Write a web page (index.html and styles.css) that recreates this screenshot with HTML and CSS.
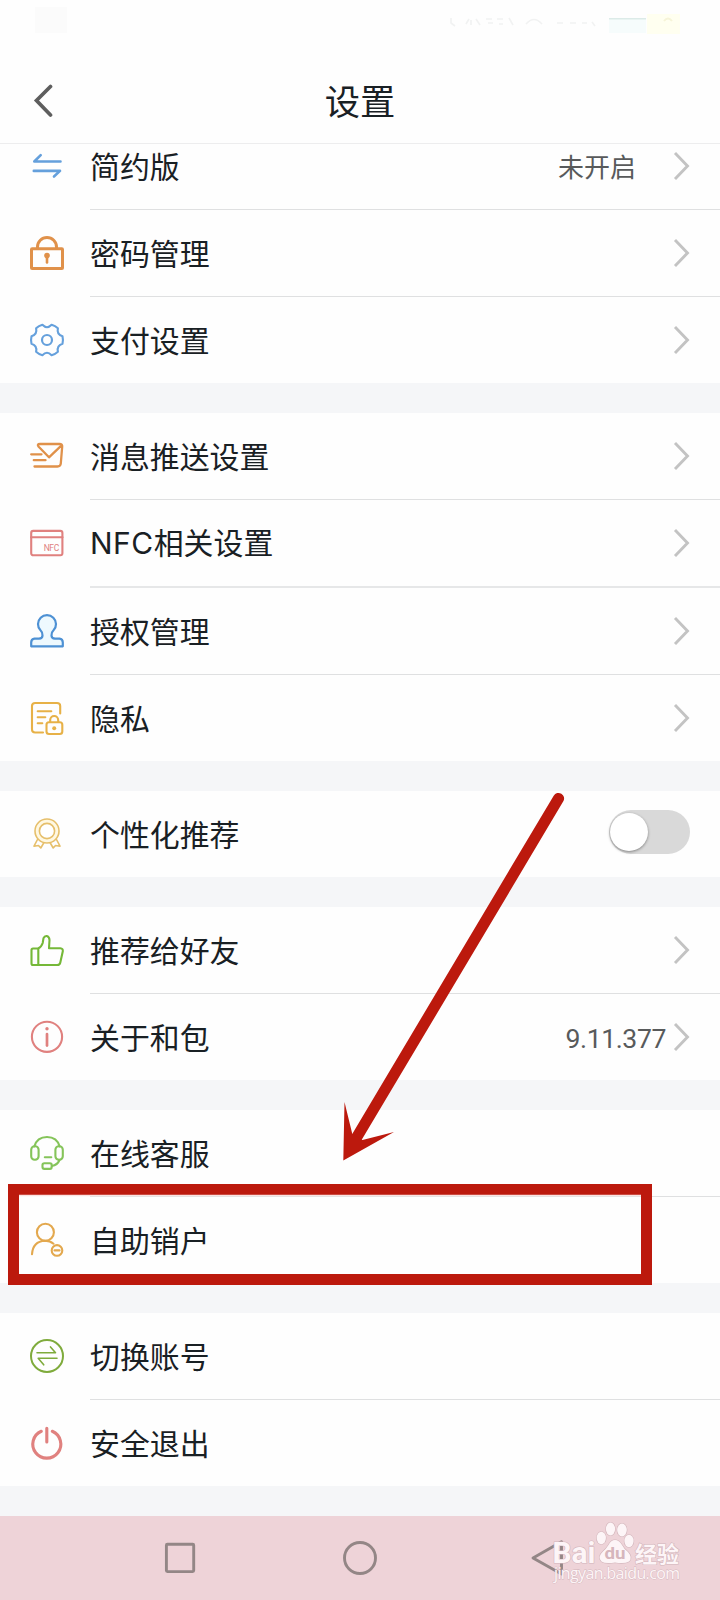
FILE: index.html
```html
<!DOCTYPE html>
<html lang="zh-CN">
<head>
<meta charset="utf-8">
<title>设置</title>
<link rel="stylesheet" href="styles.css">
</head>
<body>
<div class="screen">
  <header class="header">
    <svg class="status" width="720" height="44" viewBox="0 0 720 44">
      <rect x="35" y="7" width="32" height="26" fill="#fbfbfb"/>
      <g fill="none" stroke="#f1f2f2" stroke-width="1.6">
        <path d="M451 18v5l4 3M466 24l3-5M471 20v5M476 19l4 6M486 19h6M488 23h5M497 19h6M499 24h4M509 18l4 7M526 24q8-9 16 0M557 23h6M570 23h6M582 23h5M592 22l3 4"/>
      </g>
      <rect x="609" y="18" width="37" height="15" fill="#f6fcfc"/>
      <rect x="609" y="18" width="37" height="1.5" fill="#dcebe8"/>
      <rect x="647" y="14" width="33" height="20" fill="#fffff0"/>
      <path d="M664 21q4-5 8 0" fill="none" stroke="#f6f4d8" stroke-width="2"/>
    </svg>
    <div class="titlebar">
      <svg class="back" width="20" height="44" viewBox="0 0 20 44"><path d="M17.500 8.500L3.500 22.500L17.500 37" fill="none" stroke="#5e5e5e" stroke-width="3.700" stroke-linecap="round"/></svg>
      <h1 class="title">设置</h1>
    </div>
  </header>

  <main class="list">
    <section class="group">
      <div class="row clipped">
        <svg class="icon blue" viewBox="0 0 36 37"><path stroke-width="2.600" d="M31.500 13.500H5.300L11.700 7.100M4.800 22.900H31L25 28.500"/></svg>
        <div class="cell"><span class="label">简约版</span><span class="value">未开启</span><svg class="chev" viewBox="0 0 18 30"><path d="M2 2L14.500 15L2 28"/></svg></div>
      </div>
      <div class="row">
        <svg class="icon orange" viewBox="0 0 36 37"><g stroke-width="3"><rect x="2.500" y="13.800" width="31" height="19.800" rx=".6"/><path d="M8.500 13.500V12a9.500 9.500 0 0 1 19 0v1.500"/><path stroke-width="2.600" d="M18 21v6.500"/></g><circle cx="18" cy="20.600" r="2.800" class="solid"/></svg>
        <div class="cell"><span class="label">密码管理</span><svg class="chev" viewBox="0 0 18 30"><path d="M2 2L14.500 15L2 28"/></svg></div>
      </div>
      <div class="row">
        <svg class="icon blue" viewBox="0 0 36 37"><path stroke-width="2.100" d="M33.500 14.300Q34.400 18 33.500 21.700Q27.500 23.600 28.900 29.700Q26.200 32.200 22.600 33.200Q18 28.400 13.400 33.200Q9.800 32.200 7.100 29.700Q8.500 23.600 2.500 21.700Q1.600 18 2.500 14.300Q8.500 12.400 7.100 6.300Q9.800 3.800 13.400 2.800Q18 7.600 22.600 2.800Q26.200 3.800 28.900 6.300Q27.500 12.400 33.500 14.300Z"/><circle cx="18" cy="18" r="5" stroke-width="2.200"/></svg>
        <div class="cell"><span class="label">支付设置</span><svg class="chev" viewBox="0 0 18 30"><path d="M2 2L14.500 15L2 28"/></svg></div>
      </div>
    </section>

    <section class="group">
      <div class="row">
        <svg class="icon orange" viewBox="0 0 36 37"><path stroke-width="2.300" d="M5.500 28.500H28.500Q31.500 28.500 31.800 25.500L33.200 8.500Q33.500 6 30.500 6H11Q7.500 6 9.700 8.700L20 19.300L32.800 7.200M2.200 16.300H12.500M4.800 22.200H16.500"/></svg>
        <div class="cell"><span class="label">消息推送设置</span><svg class="chev" viewBox="0 0 18 30"><path d="M2 2L14.500 15L2 28"/></svg></div>
      </div>
      <div class="row tall">
        <svg class="icon rose" viewBox="0 0 36 37"><rect x="2.200" y="5.900" width="31.200" height="24.400" rx="2" stroke-width="2.100"/><path stroke-width="1.900" d="M2 12.200H33.600"/><text x="14.700" y="26" font-size="8.500" textLength="15.500" class="nfc">NFC</text></svg>
        <div class="cell"><span class="label"><span class="latin">NFC</span>相关设置</span><svg class="chev" viewBox="0 0 18 30"><path d="M2 2L14.500 15L2 28"/></svg></div>
      </div>
      <div class="row">
        <svg class="icon azure" viewBox="0 0 36 37"><path fill="#eef9fe" stroke-width="2.200" d="M2.200 33.300V29.500Q2.200 26 5.500 25.700H10Q13.500 25.500 13.500 22.500Q13.800 19.500 11.500 17.300A9 9 0 1 1 24.500 17.300Q22.200 19.500 22.500 22.500Q22.500 25.500 26 25.700H30.500Q33.800 26 33.800 29.500V33.300Z"/></svg>
        <div class="cell"><span class="label">授权管理</span><svg class="chev" viewBox="0 0 18 30"><path d="M2 2L14.500 15L2 28"/></svg></div>
      </div>
      <div class="row">
        <svg class="icon gold" viewBox="0 0 36 37"><g stroke-width="2.100"><path d="M31.200 13.500V6Q31.200 3 28 3H6.200Q3 3 3 6V29.500Q3 32.500 6.200 32.500H14M8.700 11.200H22.300M8.700 17.200H16.300M8.700 23.300H13.300"/><rect x="17.500" y="22.300" width="15.800" height="11.700" rx="2.500"/><path d="M21.200 22V20a4 4 0 0 1 8 0v2"/></g><circle cx="25.200" cy="28.200" r="2" class="solid"/></svg>
        <div class="cell"><span class="label">隐私</span><svg class="chev" viewBox="0 0 18 30"><path d="M2 2L14.500 15L2 28"/></svg></div>
      </div>
    </section>

    <section class="group">
      <div class="row">
        <svg class="icon sand" viewBox="0 0 36 37"><g stroke-width="1.600"><circle cx="18" cy="15" r="12" fill="#fff8e2"/><circle cx="18" cy="15" r="7.600" fill="#fff"/><path d="M8.500 23.500L5 30.200L9.500 29.500L11.800 32L14.700 27M27.500 23.500L31 30.200L26.500 29.500L24.200 32L21.300 27"/></g></svg>
        <div class="cell"><span class="label">个性化推荐</span><span class="toggle"><span class="knob"></span></span></div>
      </div>
    </section>

    <section class="group">
      <div class="row">
        <svg class="icon green" viewBox="0 0 36 37"><path stroke-width="2.100" d="M9.300 16.500V33M4 16.500H9Q12.500 15 13.700 11L14.500 6.200Q15.500 3.800 17.700 4Q20.300 4.600 20.500 8L20 16.200H31.300Q34.200 16.500 33.800 19.300L31.300 30.500Q30.800 33 28.300 33H4Q2.500 33 2.500 31.500V18Q2.500 16.500 4 16.500Z"/></svg>
        <div class="cell"><span class="label">推荐给好友</span><svg class="chev" viewBox="0 0 18 30"><path d="M2 2L14.500 15L2 28"/></svg></div>
      </div>
      <div class="row">
        <svg class="icon rose" viewBox="0 0 36 37"><circle cx="18" cy="17.800" r="15.100" stroke-width="2.100"/><path stroke-width="2.700" d="M18 15V26.600"/><circle cx="18" cy="9.700" r="1.700" class="solid"/></svg>
        <div class="cell"><span class="label">关于和包</span><span class="value version">9.11.377</span><svg class="chev" viewBox="0 0 18 30"><path d="M2 2L14.500 15L2 28"/></svg></div>
      </div>
    </section>

    <section class="group">
      <div class="row marked">
        <svg class="icon lime" viewBox="0 0 36 37"><g stroke-width="2.100"><path d="M5.300 11.500Q8 2 18 2T30.700 11.500M30.500 25Q28.500 30 22.800 31M15.800 22.200H22.300"/><rect x="2.200" y="11.300" width="7.400" height="13.400" rx="3.500"/><rect x="26.400" y="11.300" width="7.400" height="13.400" rx="3.500"/><rect x="13.500" y="28.300" width="9.200" height="5.600" rx="1.800"/></g></svg>
        <div class="cell"><span class="label">在线客服</span></div>
      </div>
      <div class="row">
        <svg class="icon amber" viewBox="0 0 36 37"><g stroke-width="2.100"><circle cx="16.400" cy="10.200" r="8.500"/><path d="M3 32.300Q3.800 19.400 16 18.800Q21 18.800 24.500 21.700"/><circle cx="28" cy="28.400" r="5.300"/><path d="M25.500 28.400H30.500"/></g></svg>
        <div class="cell"><span class="label">自助销户</span></div>
      </div>
    </section>

    <section class="group">
      <div class="row">
        <svg class="icon olive" viewBox="0 0 36 37"><circle cx="18" cy="18" r="16" stroke-width="2"/><path stroke-width="1.600" d="M8 14.700H26.500L21.500 8.900M28 20.300H9.200L14.700 26.800"/></svg>
        <div class="cell"><span class="label">切换账号</span></div>
      </div>
      <div class="row">
        <svg class="icon rose" viewBox="0 0 36 37"><path stroke-width="3.100" d="M12.300 6.300A14 14 0 1 0 23.300 6.300M17.800 3.300V17"/></svg>
        <div class="cell"><span class="label">安全退出</span></div>
      </div>
    </section>
  </main>

  <nav class="navbar">
    <svg width="720" height="84" viewBox="0 0 720 84">
      <g fill="none" stroke="#938686" stroke-width="2.900" stroke-linejoin="round">
        <rect x="166.400" y="28.300" width="27.300" height="27.300" rx="1"/>
        <circle cx="360" cy="42" r="15.500"/>
        <path d="M533 42L561.500 25.800V58Z"/>
      </g>
      <g class="mark">
        <text x="552.500" y="47" font-size="29" font-weight="700" textLength="43" lengthAdjust="spacingAndGlyphs" class="bai">Bai</text>
        <ellipse cx="601.300" cy="22" rx="4.600" ry="6.200"/>
        <ellipse cx="610.500" cy="13" rx="4.600" ry="6.500"/>
        <ellipse cx="622" cy="14" rx="4.800" ry="6.500"/>
        <ellipse cx="629" cy="25" rx="4.600" ry="6.200"/>
        <path d="M615 24Q619 24 622 29Q624 33 628 36Q633 42 629 45.500Q625 48 615 46.500Q605 48 601.500 45.500Q597 41 603 35.500Q606 33 608.500 29Q611 24 615 24Z"/>
        <text x="604.500" y="43" font-size="17" font-weight="700" class="du" textLength="21" lengthAdjust="spacingAndGlyphs">du</text>
        <text x="635" y="45.500" font-size="22" font-weight="700" textLength="44">经验</text>
        <text x="554" y="63" font-size="16" textLength="126" class="url">jingyan.baidu.com</text>
      </g>
    </svg>
  </nav>

  <svg class="annotation" width="720" height="1600" viewBox="0 0 720 1600">
    <rect x="13.500" y="1189.500" width="633" height="90" fill="none" stroke="#bc190d" stroke-width="11"/>
    <path d="M19 1195.500H641" stroke="#fbe3e1" stroke-width="1.500"/>
    <path d="M558.500 798.500L356 1138.500" stroke="#bc190d" stroke-width="11.200" stroke-linecap="round"/>
    <path d="M343.300 1160.500L344.500 1102L352.300 1134L362.500 1140L394 1132Z" fill="#bc190d"/>
  </svg>
</div>
</body>
</html>
```

FILE: styles.css
```css
* { box-sizing: border-box; }

body {
  margin: 0;
  background: #f5f6f8;
  color: #192024;
  font-family: "Noto Sans CJK SC", sans-serif;
}

.screen {
  position: relative;
  width: 720px;
  height: 1600px;
  overflow: hidden;
  display: flex;
  flex-direction: column;
}

.header {
  height: 144px;
  flex: none;
  background: #fefefe;
  border-bottom: 1px solid #ededee;
}

.status { display: block; }

.titlebar {
  display: grid;
  grid-template-columns: 60px 1fr 60px;
  align-items: center;
  height: 99px;
  padding: 13px 33px 0;
}

.back { margin-top: -1px; }

.title {
  margin: 0;
  font-size: 35.300px;
  font-weight: 400;
  line-height: 50px;
  text-align: center;
}

.list {
  flex: 1;
  display: flex;
  flex-direction: column;
  gap: 30px;
}

.group { background: #fefefe; }

.row {
  display: flex;
  height: 87px;
  padding-left: 29px;
}

.row:last-child { height: 86px; }
.row.tall { height: 88px; }
.row.clipped { height: 66px; }
.row.clipped > .icon { margin-top: 4px; }
.row.clipped > .cell { height: 66px; padding-bottom: 21px; }

.icon {
  flex: none;
  width: 36px;
  height: 37px;
  margin: 25px 25px 0 0;
  fill: none;
  stroke: currentColor;
  stroke-linecap: round;
  stroke-linejoin: round;
}

.icon .solid { fill: currentColor; stroke: none; }
.nfc { font-family: Roboto, sans-serif; fill: currentColor; stroke: none; }

.blue { color: #65a0dc; }
.azure { color: #4e91d4; }
.orange { color: #e0914a; }
.rose { color: #e0817f; }
.gold { color: #e7b147; }
.sand { color: #e6bf6b; }
.green { color: #75b838; }
.lime { color: #85c45a; }
.amber { color: #e3a84e; }
.olive { color: #7fab3c; }

.cell {
  flex: 1;
  display: flex;
  align-items: center;
  padding-right: 29px;
  border-bottom: 1px solid #dfe0e1;
}

.row.tall .cell { border-bottom-width: 2px; border-bottom-color: #e6e7e8; }
.row:last-child .cell { border-bottom: 0; }

.label {
  flex: 1;
  margin-top: -3px;
  font-size: 29.900px;
  line-height: 44px;
}

.latin {
  font-family: Inter, sans-serif;
  font-size: 30px;
  letter-spacing: 0.500px;
}

.value {
  margin-right: 37px;
  font-size: 26px;
  line-height: 38px;
  color: #585a5b;
}

.version {
  margin: 3px 7px 0 0;
  font-family: Roboto, sans-serif;
  font-size: 26.600px;
  letter-spacing: -0.400px;
}

.chev {
  width: 18px;
  height: 30px;
  margin-top: -1px;
  fill: none;
  stroke: #c3c3c3;
  stroke-width: 2.900;
}

.toggle {
  width: 81px;
  height: 44px;
  margin: -5px 1px 0 0;
  padding: 3px 0 0 1px;
  border-radius: 22px;
  background: #d9d9d9;
}

.knob {
  display: block;
  width: 38px;
  height: 38px;
  border-radius: 50%;
  background: #fff;
  box-shadow: 0 1px 3px rgba(0, 0, 0, 0.4);
}

.navbar {
  flex: none;
  height: 84px;
  background: #eed3d8;
}

.navbar svg { display: block; }

.mark {
  fill: #fdf5f7;
  stroke: #d3b6bc;
  stroke-width: 1.200;
  paint-order: stroke;
  font-family: "Open Sans", "Noto Sans CJK SC", sans-serif;
}

.mark .bai { font-family: Roboto, sans-serif; }
.mark .du { fill: #d6b6bc; stroke: none; font-family: Roboto, sans-serif; }
.mark .url { stroke-width: 0.800; }

.annotation {
  position: absolute;
  inset: 0;
  pointer-events: none;
}
```
